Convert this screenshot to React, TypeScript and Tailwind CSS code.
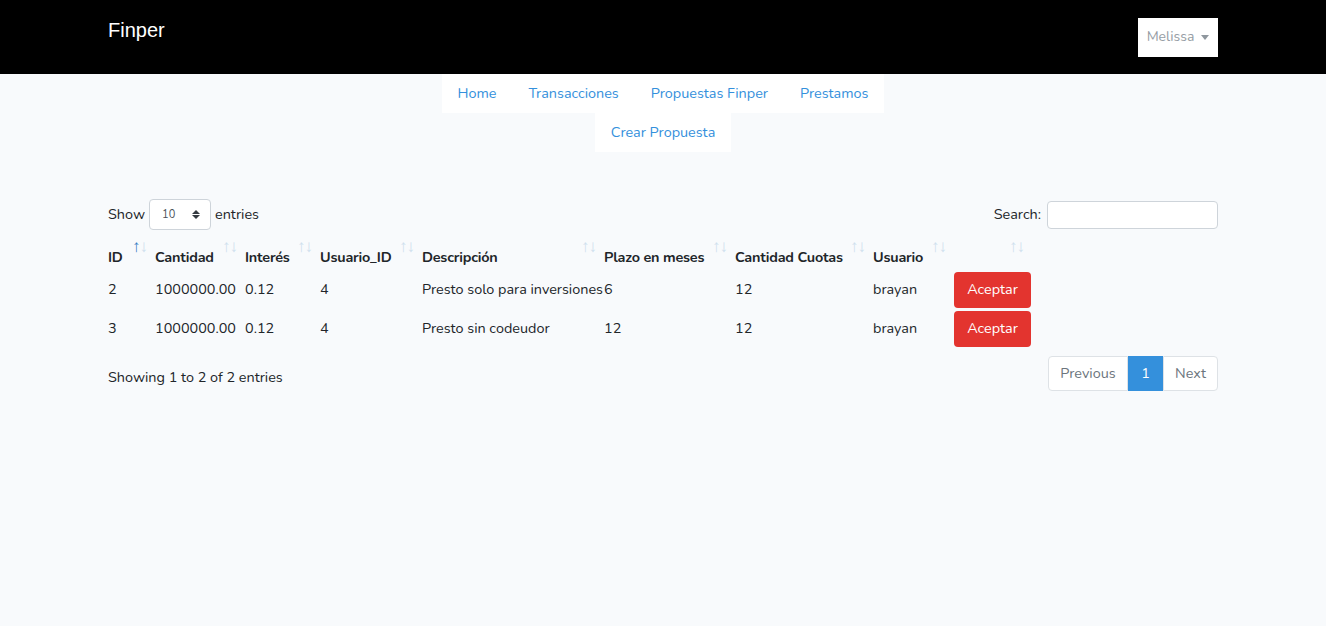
import React from 'react';

const rows = [
  { id: 2, cantidad: '1000000.00', interes: '0.12', usuarioId: 4, descripcion: 'Presto solo para inversiones', plazo: 6, cuotas: 12, usuario: 'brayan' },
  { id: 3, cantidad: '1000000.00', interes: '0.12', usuarioId: 4, descripcion: 'Presto sin codeudor', plazo: 12, cuotas: 12, usuario: 'brayan' },
];

const columns = [
  { label: 'ID', w: 'w-[47px]', active: true },
  { label: 'Cantidad', w: 'w-[90px]' },
  { label: 'Interés', w: 'w-[75px]' },
  { label: 'Usuario_ID', w: 'w-[102px]' },
  { label: 'Descripción', w: 'w-[182px]' },
  { label: 'Plazo en meses', w: 'w-[131px]' },
  { label: 'Cantidad Cuotas', w: 'w-[138px]' },
  { label: 'Usuario', w: 'w-[81px]' },
  { label: '', w: 'w-[78px]' },
];

function SortIcon({ active }: { active?: boolean }) {
  return (
    <span className="absolute right-[8px] top-[2px] text-[17px] leading-none tracking-[-1px] font-normal font-['Liberation_Sans',sans-serif]">
      <span className={active ? 'text-[#3a7fc4]' : 'text-[#cfe0ee]'}>↑</span>
      <span className="text-[#cfe0ee]">↓</span>
    </span>
  );
}

export default function App() {
  return (
    <div className="min-h-[626px] bg-[#f8fafc] text-[#212529] text-[14.4px] leading-[1.6] font-['Nunito','Lato',sans-serif]">
      <nav className="bg-black h-[74px]">
        <div className="mx-auto w-[1110px] flex items-start justify-between">
          <a className="mt-[14px] text-white text-[20px] font-['Liberation_Sans',Arial,sans-serif]">Finper</a>
          <button className="mt-[18px] h-[39px] w-[80px] bg-white flex items-center justify-center gap-[7px] text-[#969da4] text-[14px]">
            Melissa
            <span className="w-0 h-0 border-l-[4px] border-r-[4px] border-t-[5px] border-l-transparent border-r-transparent border-t-[#8f979e]" />
          </button>
        </div>
      </nav>

      <div className="flex flex-col items-center">
        <ul className="flex bg-white">
          {['Home', 'Transacciones', 'Propuestas Finper', 'Prestamos'].map(l => (
            <li key={l}>
              <a className="block px-4 h-[39px] leading-[39px] text-[#3490dc]">{l}</a>
            </li>
          ))}
        </ul>
        <ul className="flex bg-white">
          <li>
            <a className="block px-4 h-[39px] leading-[39px] text-[#3490dc]">Crear Propuesta</a>
          </li>
        </ul>
      </div>

      <div className="mx-auto w-[1110px] mt-[47px]">
        <div className="flex justify-between items-center">
          <label className="flex items-center gap-[4px]">
            Show
            <span className="h-[31px] w-[62px] bg-white border border-[#ced4da] rounded-[4px] flex items-center justify-between pl-[12px] pr-[10px] text-[11px] text-[#495057]">
              10
              <span className="flex flex-col gap-[1px]">
                <span className="w-0 h-0 border-l-[4px] border-r-[4px] border-b-[4px] border-l-transparent border-r-transparent border-b-[#343a40]" />
                <span className="w-0 h-0 border-l-[4px] border-r-[4px] border-t-[4px] border-l-transparent border-r-transparent border-t-[#343a40]" />
              </span>
            </span>
            entries
          </label>
          <label className="flex items-center gap-[6px]">
            Search:
            <input className="h-[28px] w-[171px] bg-white border border-[#ced4da] rounded-[4px]" />
          </label>
        </div>

        <table className="mt-[6px] border-collapse text-left">
          <thead>
            <tr>
              {columns.map((c, i) => (
                <th key={i} className={`${c.w} relative p-0 pt-[10px] pb-[1px] font-bold tracking-[-0.2px] align-bottom`}>
                  {c.label}
                  <SortIcon active={c.active} />
                </th>
              ))}
            </tr>
          </thead>
          <tbody>
            {rows.map(r => (
              <tr key={r.id} className="h-[39px]">
                <td className="p-0">{r.id}</td>
                <td className="p-0">{r.cantidad}</td>
                <td className="p-0">{r.interes}</td>
                <td className="p-0">{r.usuarioId}</td>
                <td className="p-0">{r.descripcion}</td>
                <td className="p-0">{r.plazo}</td>
                <td className="p-0">{r.cuotas}</td>
                <td className="p-0">{r.usuario}</td>
                <td className="p-0">
                  <button className="h-[36px] w-[77px] bg-[#e3342f] text-white rounded-[4px] text-[14.4px]">Aceptar</button>
                </td>
              </tr>
            ))}
          </tbody>
        </table>

        <div className="flex justify-between items-start mt-[8px]">
          <div className="mt-[10px]">Showing 1 to 2 of 2 entries</div>
          <ul className="flex h-[35px]">
            <li className="w-[80px] text-center leading-[33px] bg-white border border-[#dee2e6] rounded-l-[4px] text-[#6c757d]">Previous</li>
            <li className="w-[35px] text-center leading-[35px] bg-[#3490dc] text-white">1</li>
            <li className="w-[55px] text-center leading-[33px] bg-white border border-[#dee2e6] rounded-r-[4px] text-[#6c757d]">Next</li>
          </ul>
        </div>
      </div>
    </div>
  );
}
